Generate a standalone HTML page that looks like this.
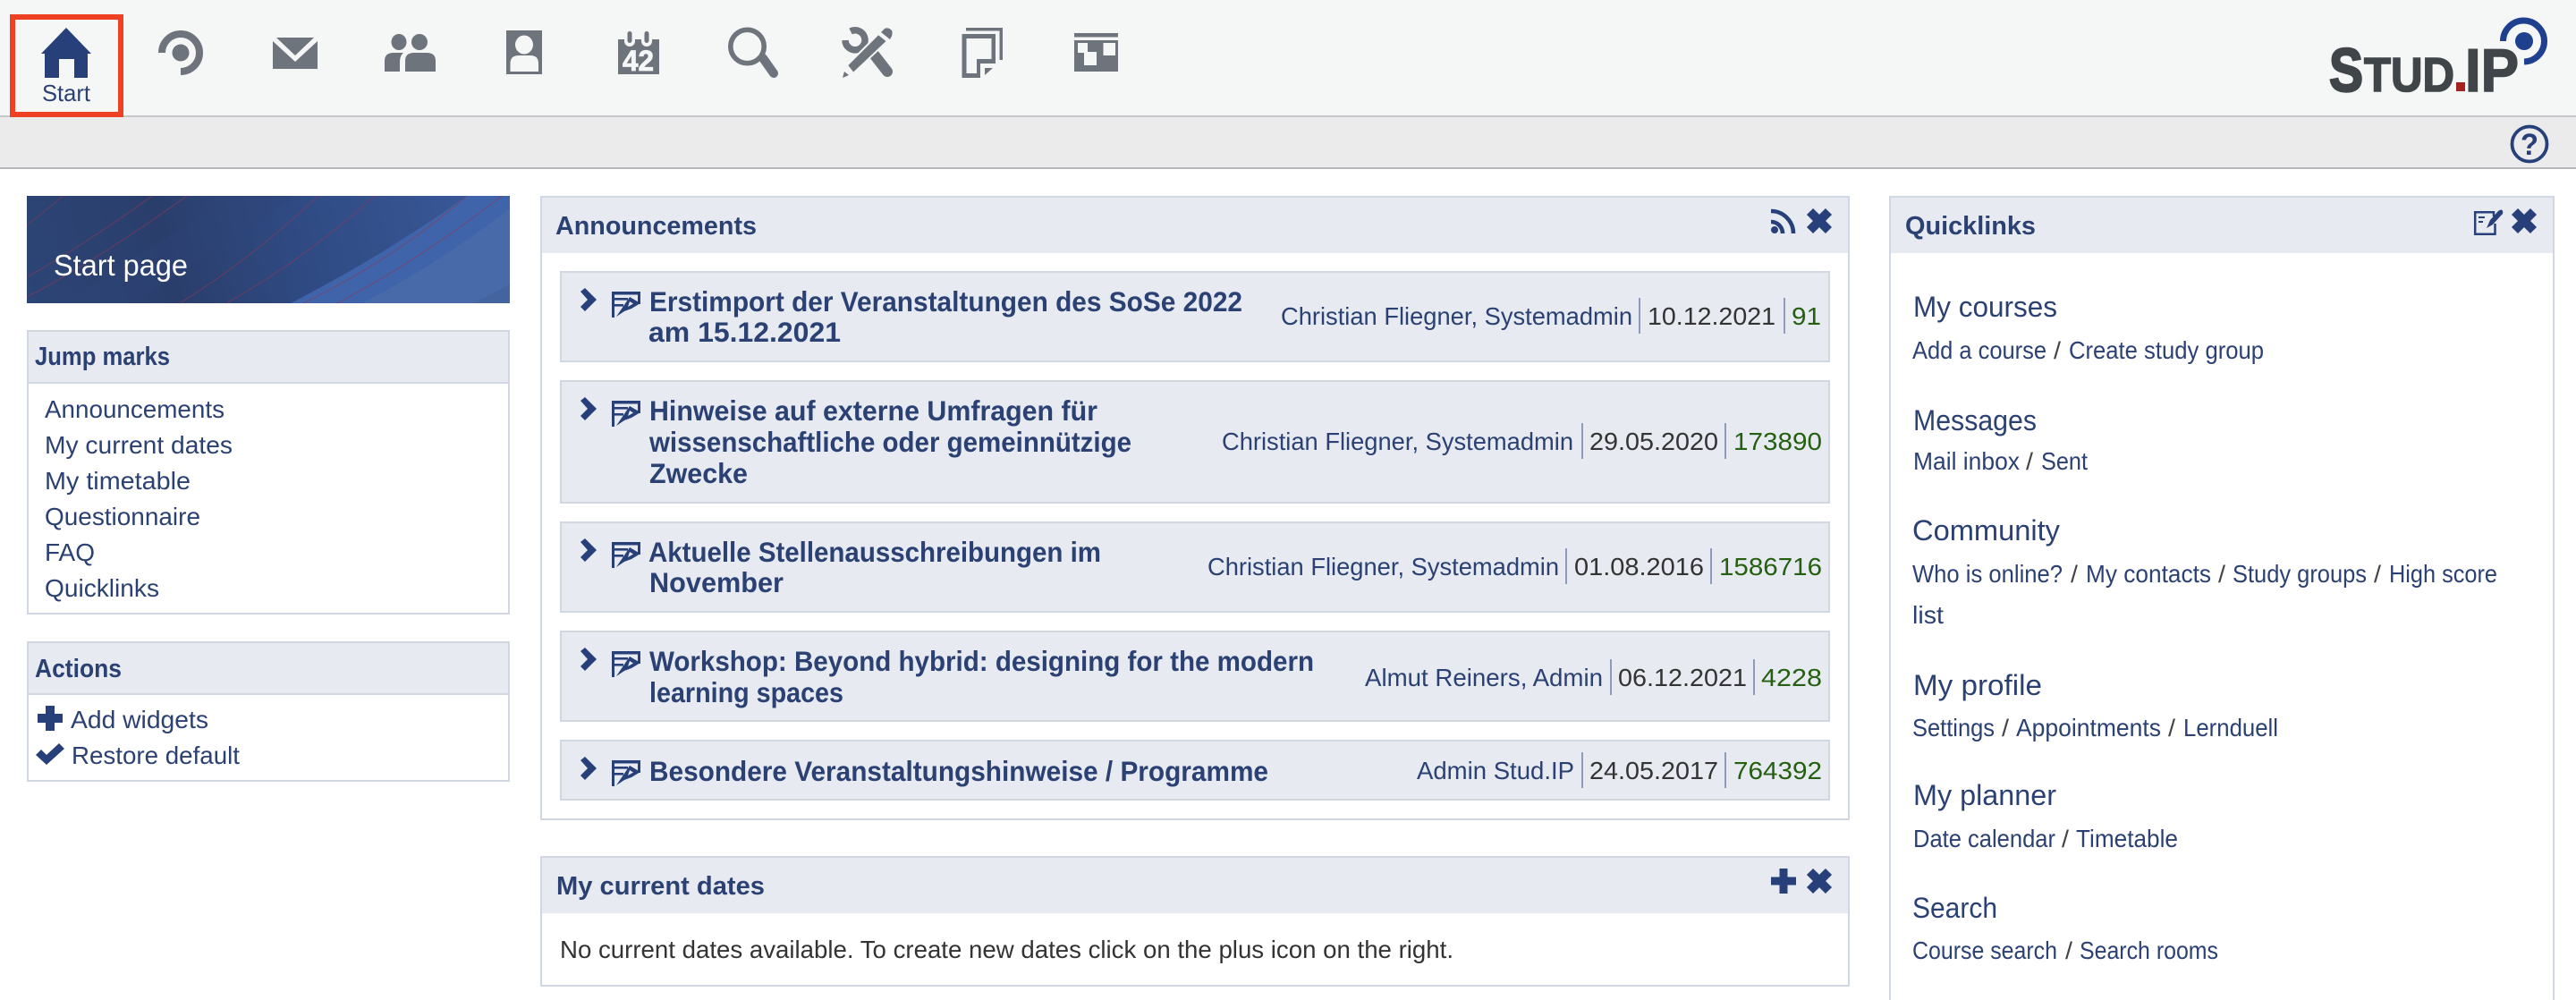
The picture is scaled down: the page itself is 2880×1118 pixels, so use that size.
<!DOCTYPE html>
<html lang="en">
<head>
<meta charset="utf-8">
<title>Start page - Stud.IP</title>
<style>
html,body{margin:0;padding:0;width:2880px;height:1118px;overflow:hidden;background:#fff}
body{position:relative;font-family:"Liberation Sans",sans-serif}
.a{position:absolute;box-sizing:border-box}
.box{border:2px solid #d0d7e3;background:#fff}
.hd{background:#e7eaf0}
.item{border:2px solid #d0d7e3;background:#e7eaf0}
svg{position:absolute;left:0;top:0}
text{font-family:"Liberation Sans",sans-serif;white-space:pre}
.n{font-size:28px;fill:#2b4174}
.h{font-size:32px;fill:#2b4174}
.b{font-size:28.5px;font-weight:bold;fill:#2b4174}
.t{font-size:31.5px;font-weight:bold;fill:#2b4174}
.d{font-size:28px;fill:#333}
.c{font-size:28px;fill:#24600f}
.s{font-size:28px;fill:#333}
.l{font-size:27px;fill:#444}
</style>
</head>
<body>
<!-- top bars -->
<div class="a" style="left:0;top:0;width:2880px;height:131px;background:#f5f6f6;border-bottom:2px solid #c6c7ca"></div>
<div class="a" style="left:0;top:131px;width:2880px;height:58px;background:#ebebeb;border-bottom:2px solid #b6b6bb"></div>
<div class="a" style="left:11px;top:16px;width:127px;height:115px;border:6px solid #ee4023"></div>

<!-- sidebar -->
<div class="a box" style="left:30px;top:369px;width:540px;height:318px"></div>
<div class="a hd" style="left:32px;top:371px;width:536px;height:56px;border-bottom:0"></div>
<div class="a" style="left:32px;top:427px;width:536px;height:2px;background:#d0d7e3"></div>
<div class="a box" style="left:30px;top:717px;width:540px;height:157px"></div>
<div class="a hd" style="left:32px;top:719px;width:536px;height:56px"></div>
<div class="a" style="left:32px;top:775px;width:536px;height:2px;background:#d0d7e3"></div>

<!-- main panels -->
<div class="a box" style="left:604px;top:219px;width:1464px;height:698px"></div>
<div class="a hd" style="left:606px;top:221px;width:1460px;height:62px"></div>
<div class="a item" style="left:626px;top:303px;width:1420px;height:102px"></div>
<div class="a item" style="left:626px;top:425px;width:1420px;height:138px"></div>
<div class="a item" style="left:626px;top:583px;width:1420px;height:102px"></div>
<div class="a item" style="left:626px;top:705px;width:1420px;height:102px"></div>
<div class="a item" style="left:626px;top:827px;width:1420px;height:68px"></div>
<div class="a box" style="left:604px;top:957px;width:1464px;height:146px"></div>
<div class="a hd" style="left:606px;top:959px;width:1460px;height:62px"></div>

<!-- quicklinks -->
<div class="a box" style="left:2112px;top:219px;width:744px;height:920px"></div>
<div class="a hd" style="left:2114px;top:221px;width:740px;height:62px"></div>

<svg width="2880" height="1118" viewBox="0 0 2880 1118" xmlns="http://www.w3.org/2000/svg">
<defs>
<linearGradient id="bn" gradientUnits="userSpaceOnUse" x1="30" y1="339" x2="570" y2="219">
<stop offset="0" stop-color="#2c4576"/>
<stop offset=".3" stop-color="#2a3e6b"/>
<stop offset=".55" stop-color="#2f4a82"/>
<stop offset=".75" stop-color="#34518d"/>
<stop offset="1" stop-color="#3b5a9c"/>
</linearGradient>
<g id="chev"><path d="M649 326 654 322 667 335 654 348 649 343 657 335Z" fill="#28407a"/></g>
<g id="ann" fill="#28407a">
<path d="M684 326H716V340H713V329.5H687V355H684Z"/>
<rect x="687" y="333" width="15" height="2.6"/>
<rect x="687" y="340" width="10" height="2.6"/>
<path d="M689 354 704 332 716 339 706 345 698 348Z"/>
<path d="M704 337 708 339.5 702 343Z" fill="#e7eaf0"/>
</g>
<g id="x"><path d="M3.5 3.5 24.5 24.5M24.5 3.5 3.5 24.5" stroke="#28407a" stroke-width="10" fill="none"/></g>
</defs>

<!-- NAV ICONS -->
<g fill="#6e747c">
<!-- home -->
<path fill="#28407a" d="M74 31 102 60H98V87H83V66H66V87H50V60H46Z"/>
<text x="47" y="113" font-size="26" fill="#2b4174" textLength="54" lengthAdjust="spacingAndGlyphs">Start</text>
<!-- blubber ring -->
<path d="M181 59A21 21 0 1 1 202 80" fill="none" stroke="#6e747c" stroke-width="8"/>
<ellipse cx="202" cy="59" rx="9.5" ry="9.5"/>
<!-- mail -->
<path d="M309 42H351L330 62Z"/>
<path d="M305 46 330 69 355 46V77H305Z"/>
<!-- community -->
<ellipse cx="446" cy="47" rx="8.5" ry="9"/>
<ellipse cx="469" cy="47" rx="9" ry="9"/>
<path d="M430 80V68Q430 59 440 59H451Q447 62 447 70V80Z"/>
<path d="M453 80V68Q453 59 463 59H477Q487 59 487 68V80Z"/>
<!-- profile -->
<rect x="566" y="34" width="40" height="49"/>
<ellipse cx="586" cy="50" rx="10" ry="10.5" fill="#f5f6f6"/>
<path d="M570.5 80V71Q570.5 62 580 62H593Q602 62 602 71V80Z" fill="#f5f6f6"/>
<!-- calendar -->
<rect x="691" y="44" width="46" height="39"/>
<rect x="698" y="35" width="12" height="17" rx="6" fill="#f5f6f6"/>
<rect x="717" y="35" width="12" height="17" rx="6" fill="#f5f6f6"/>
<rect x="701.5" y="35" width="5" height="13" rx="2.5"/>
<rect x="720.5" y="35" width="5" height="13" rx="2.5"/>
<text x="696" y="79" font-size="32" font-weight="bold" fill="#f5f6f6" stroke="#f5f6f6" stroke-width=".8" textLength="35" lengthAdjust="spacingAndGlyphs">42</text>
<!-- search -->
<circle cx="835.5" cy="52" r="18.7" fill="none" stroke="#6e747c" stroke-width="5.6"/>
<path d="M853 65 865 82" stroke="#6e747c" stroke-width="10" stroke-linecap="round" fill="none"/>
<!-- tools -->
<path d="M951 35A11 11 0 1 1 945 45" fill="none" stroke="#6e747c" stroke-width="7.5"/>
<path d="M978 62 992 80" stroke="#6e747c" stroke-width="12" stroke-linecap="round" fill="none"/>
<path d="M947 73 982 38 992 46 954 82Z" stroke="#f5f6f6" stroke-width="2"/>
<path d="M985 36 989 32Q993 30 997 34Q999 38 995 44Z"/>
<path d="M942 87 944 80 949 84Z"/>
<!-- files -->
<path d="M1080 31H1121V67H1117.5V34.5H1080Z"/>
<path fill-rule="evenodd" d="M1075.5 38H1113V71H1096V87H1075.5ZM1080.5 43V82H1092V66H1108.5V43Z"/>
<path d="M1101 76H1110L1101 84Z"/>
<!-- tile -->
<rect x="1201" y="37" width="49" height="4.5"/>
<rect x="1201" y="45" width="49" height="35"/>
<path d="M1205 48H1216V58H1226V73H1212V59H1205Z" fill="#f5f6f6"/>
<rect x="1233.5" y="48" width="13.5" height="14" fill="#f5f6f6"/>
</g>

<!-- LOGO -->
<g fill="#3f4549" stroke="#3f4549" font-weight="bold">
<text x="2604" y="102" font-size="69" stroke-width="2.4" textLength="38" lengthAdjust="spacingAndGlyphs">S</text>
<text x="2643" y="102" font-size="54" stroke-width="1.6" textLength="101" lengthAdjust="spacingAndGlyphs">TUD</text>
<text x="2756" y="102" font-size="68" stroke-width="1.6" textLength="60" lengthAdjust="spacingAndGlyphs">IP</text>
</g>
<rect x="2746" y="92" width="10" height="10" fill="#a5231f"/>
<path d="M2798.5 46A23 23 0 1 1 2822 69" fill="none" stroke="#1f3f8f" stroke-width="7"/>
<circle cx="2822" cy="46" r="10" fill="#1f3f8f"/>

<!-- HELP -->
<circle cx="2828" cy="161" r="19.5" fill="none" stroke="#28407a" stroke-width="3.8"/>
<text x="2818" y="173" font-size="34" font-weight="bold" fill="#28407a" textLength="20" lengthAdjust="spacingAndGlyphs">?</text>

<!-- BANNER -->
<rect x="30" y="219" width="540" height="120" fill="url(#bn)"/>
<path d="M325 339Q430 285 522 219H570V339Z" fill="#4064aa"/>
<path d="M405 339Q490 295 570 233V339Z" fill="#486aa8"/>
<path d="M530 339 570 318V339Z" fill="#44649f"/>
<path d="M70 339 260 219H330L150 339Z" fill="#2d4577" opacity=".35"/>
<g fill="none" stroke="#8a3a55" stroke-width="1.1" opacity=".6">
<path d="M30 252 71 219"/>
<path d="M30 332Q110 290 209 219"/>
<path d="M30 310Q100 270 170 219"/>
<path d="M201 339Q280 290 356 219"/>
<path d="M253 339Q340 290 419 219"/>
<path d="M339 339Q440 290 522 219"/>
<path d="M377 339Q470 290 561 219"/>
</g>
<text x="60" y="308" font-size="33" fill="#fff" textLength="150" lengthAdjust="spacingAndGlyphs">Start page</text>

<!-- SIDEBAR TEXT -->
<text class="b" x="39" y="408" textLength="151" lengthAdjust="spacingAndGlyphs">Jump marks</text>
<text class="n" x="50" y="467" textLength="201" lengthAdjust="spacingAndGlyphs">Announcements</text>
<text class="n" x="50" y="507" textLength="210" lengthAdjust="spacingAndGlyphs">My current dates</text>
<text class="n" x="50" y="547" textLength="163" lengthAdjust="spacingAndGlyphs">My timetable</text>
<text class="n" x="50" y="587" textLength="174" lengthAdjust="spacingAndGlyphs">Questionnaire</text>
<text class="n" x="50" y="627" textLength="56" lengthAdjust="spacingAndGlyphs">FAQ</text>
<text class="n" x="50" y="667" textLength="128" lengthAdjust="spacingAndGlyphs">Quicklinks</text>
<text class="b" x="39" y="757" textLength="97" lengthAdjust="spacingAndGlyphs">Actions</text>
<path d="M51 789H61V798H70V808H61V817H51V808H42V798H51Z" fill="#28407a"/>
<text class="n" x="79" y="814" textLength="154" lengthAdjust="spacingAndGlyphs">Add widgets</text>
<path d="M40 844 46 838 52 844 66 831 72 837 52 855Z" fill="#28407a"/>
<text class="n" x="80" y="854" textLength="188" lengthAdjust="spacingAndGlyphs">Restore default</text>

<!-- ANNOUNCEMENTS -->
<text class="b" x="621" y="262" textLength="225" lengthAdjust="spacingAndGlyphs">Announcements</text>
<g fill="none" stroke="#28407a" stroke-width="4.6">
<path d="M1980 248A13 13 0 0 1 1993 261"/>
<path d="M1980 236A25 25 0 0 1 2005 261"/>
</g>
<circle cx="1984" cy="257" r="4" fill="#28407a"/>
<use href="#x" transform="translate(2020 233)"/>

<use href="#chev"/><use href="#ann"/>
<text class="t" x="726" y="348" textLength="663" lengthAdjust="spacingAndGlyphs">Erstimport der Veranstaltungen des SoSe 2022</text>
<text class="t" x="725" y="382" textLength="215" lengthAdjust="spacingAndGlyphs">am 15.12.2021</text>
<text class="n" x="1432" y="363" textLength="393" lengthAdjust="spacingAndGlyphs">Christian Fliegner, Systemadmin</text>
<rect x="1832" y="333" width="2" height="40" fill="#8d9cbd"/>
<text class="d" x="1842" y="363" textLength="143" lengthAdjust="spacingAndGlyphs">10.12.2021</text>
<rect x="1994" y="333" width="2" height="40" fill="#8d9cbd"/>
<text class="c" x="2003" y="363" textLength="33" lengthAdjust="spacingAndGlyphs">91</text>

<use href="#chev" transform="translate(0 122)"/><use href="#ann" transform="translate(0 122)"/>
<text class="t" x="726" y="470" textLength="501" lengthAdjust="spacingAndGlyphs">Hinweise auf externe Umfragen für</text>
<text class="t" x="726" y="505" textLength="539" lengthAdjust="spacingAndGlyphs">wissenschaftliche oder gemeinnützige</text>
<text class="t" x="726" y="540" textLength="110" lengthAdjust="spacingAndGlyphs">Zwecke</text>
<text class="n" x="1366" y="503" textLength="393" lengthAdjust="spacingAndGlyphs">Christian Fliegner, Systemadmin</text>
<rect x="1768" y="473" width="2" height="40" fill="#8d9cbd"/>
<text class="d" x="1777" y="503" textLength="144" lengthAdjust="spacingAndGlyphs">29.05.2020</text>
<rect x="1928" y="473" width="2" height="40" fill="#8d9cbd"/>
<text class="c" x="1938" y="503" textLength="99" lengthAdjust="spacingAndGlyphs">173890</text>

<use href="#chev" transform="translate(0 280)"/><use href="#ann" transform="translate(0 280)"/>
<text class="t" x="725" y="628" textLength="506" lengthAdjust="spacingAndGlyphs">Aktuelle Stellenausschreibungen im</text>
<text class="t" x="726" y="662" textLength="150" lengthAdjust="spacingAndGlyphs">November</text>
<text class="n" x="1350" y="643" textLength="393" lengthAdjust="spacingAndGlyphs">Christian Fliegner, Systemadmin</text>
<rect x="1750" y="613" width="2" height="40" fill="#8d9cbd"/>
<text class="d" x="1760" y="643" textLength="145" lengthAdjust="spacingAndGlyphs">01.08.2016</text>
<rect x="1912" y="613" width="2" height="40" fill="#8d9cbd"/>
<text class="c" x="1922" y="643" textLength="115" lengthAdjust="spacingAndGlyphs">1586716</text>

<use href="#chev" transform="translate(0 402)"/><use href="#ann" transform="translate(0 402)"/>
<text class="t" x="726" y="750" textLength="743" lengthAdjust="spacingAndGlyphs">Workshop: Beyond hybrid: designing for the modern</text>
<text class="t" x="726" y="785" textLength="217" lengthAdjust="spacingAndGlyphs">learning spaces</text>
<text class="n" x="1526" y="767" textLength="266" lengthAdjust="spacingAndGlyphs">Almut Reiners, Admin</text>
<rect x="1800" y="737" width="2" height="40" fill="#8d9cbd"/>
<text class="d" x="1809" y="767" textLength="144" lengthAdjust="spacingAndGlyphs">06.12.2021</text>
<rect x="1960" y="737" width="2" height="40" fill="#8d9cbd"/>
<text class="c" x="1969" y="767" textLength="68" lengthAdjust="spacingAndGlyphs">4228</text>

<use href="#chev" transform="translate(0 524)"/><use href="#ann" transform="translate(0 524)"/>
<text class="t" x="726" y="873" textLength="692" lengthAdjust="spacingAndGlyphs">Besondere Veranstaltungshinweise / Programme</text>
<text class="n" x="1584" y="871" textLength="176" lengthAdjust="spacingAndGlyphs">Admin Stud.IP</text>
<rect x="1768" y="841" width="2" height="40" fill="#8d9cbd"/>
<text class="d" x="1777" y="871" textLength="144" lengthAdjust="spacingAndGlyphs">24.05.2017</text>
<rect x="1928" y="841" width="2" height="40" fill="#8d9cbd"/>
<text class="c" x="1938" y="871" textLength="99" lengthAdjust="spacingAndGlyphs">764392</text>

<!-- DATES -->
<text class="b" x="622" y="1000" textLength="233" lengthAdjust="spacingAndGlyphs">My current dates</text>
<path d="M1989.5 971H1998.5V980.5H2008V989.5H1998.5V999H1989.5V989.5H1980V980.5H1989.5Z" fill="#28407a"/>
<use href="#x" transform="translate(2020 971)"/>
<text class="s" x="626" y="1071" textLength="999" lengthAdjust="spacingAndGlyphs">No current dates available. To create new dates click on the plus icon on the right.</text>

<!-- QUICKLINKS -->
<text class="b" x="2130" y="262" textLength="146" lengthAdjust="spacingAndGlyphs">Quicklinks</text>
<g fill="none" stroke="#28407a">
<path d="M2788 242V237.2H2767.2V261.8H2789.5V250" stroke-width="2.5"/>
<path d="M2771 243H2778M2771 248H2776" stroke-width="2"/>
</g>
<path d="M2780 255 2784 246 2793 236Q2797 233 2798 236Q2799 239 2796 241L2787 251Z" fill="#28407a"/>
<use href="#x" transform="translate(2808 233)"/>

<text class="h" x="2139" y="354" textLength="161" lengthAdjust="spacingAndGlyphs">My courses</text>
<text class="n" x="2138" y="401" textLength="150" lengthAdjust="spacingAndGlyphs">Add a course</text>
<text class="l" x="2296" y="401" textLength="8" lengthAdjust="spacingAndGlyphs">/</text>
<text class="n" x="2313" y="401" textLength="218" lengthAdjust="spacingAndGlyphs">Create study group</text>

<text class="h" x="2139" y="481" textLength="138" lengthAdjust="spacingAndGlyphs">Messages</text>
<text class="n" x="2139" y="525" textLength="119" lengthAdjust="spacingAndGlyphs">Mail inbox</text>
<text class="l" x="2265" y="525" textLength="8" lengthAdjust="spacingAndGlyphs">/</text>
<text class="n" x="2282" y="525" textLength="52" lengthAdjust="spacingAndGlyphs">Sent</text>

<text class="h" x="2138" y="604" textLength="165" lengthAdjust="spacingAndGlyphs">Community</text>
<text class="n" x="2138" y="651" textLength="168" lengthAdjust="spacingAndGlyphs">Who is online?</text>
<text class="l" x="2315" y="651" textLength="8" lengthAdjust="spacingAndGlyphs">/</text>
<text class="n" x="2332" y="651" textLength="140" lengthAdjust="spacingAndGlyphs">My contacts</text>
<text class="l" x="2480" y="651" textLength="8" lengthAdjust="spacingAndGlyphs">/</text>
<text class="n" x="2496" y="651" textLength="150" lengthAdjust="spacingAndGlyphs">Study groups</text>
<text class="l" x="2654" y="651" textLength="8" lengthAdjust="spacingAndGlyphs">/</text>
<text class="n" x="2671" y="651" textLength="121" lengthAdjust="spacingAndGlyphs">High score</text>
<text class="n" x="2138" y="697" textLength="35" lengthAdjust="spacingAndGlyphs">list</text>

<text class="h" x="2139" y="777" textLength="144" lengthAdjust="spacingAndGlyphs">My profile</text>
<text class="n" x="2138" y="823" textLength="92" lengthAdjust="spacingAndGlyphs">Settings</text>
<text class="l" x="2238" y="823" textLength="8" lengthAdjust="spacingAndGlyphs">/</text>
<text class="n" x="2254" y="823" textLength="162" lengthAdjust="spacingAndGlyphs">Appointments</text>
<text class="l" x="2424" y="823" textLength="8" lengthAdjust="spacingAndGlyphs">/</text>
<text class="n" x="2441" y="823" textLength="106" lengthAdjust="spacingAndGlyphs">Lernduell</text>

<text class="h" x="2139" y="900" textLength="160" lengthAdjust="spacingAndGlyphs">My planner</text>
<text class="n" x="2139" y="947" textLength="159" lengthAdjust="spacingAndGlyphs">Date calendar</text>
<text class="l" x="2305" y="947" textLength="8" lengthAdjust="spacingAndGlyphs">/</text>
<text class="n" x="2321" y="947" textLength="114" lengthAdjust="spacingAndGlyphs">Timetable</text>

<text class="h" x="2138" y="1026" textLength="95" lengthAdjust="spacingAndGlyphs">Search</text>
<text class="n" x="2138" y="1072" textLength="162" lengthAdjust="spacingAndGlyphs">Course search</text>
<text class="l" x="2309" y="1072" textLength="8" lengthAdjust="spacingAndGlyphs">/</text>
<text class="n" x="2325" y="1072" textLength="155" lengthAdjust="spacingAndGlyphs">Search rooms</text>
</svg>
</body>
</html>
